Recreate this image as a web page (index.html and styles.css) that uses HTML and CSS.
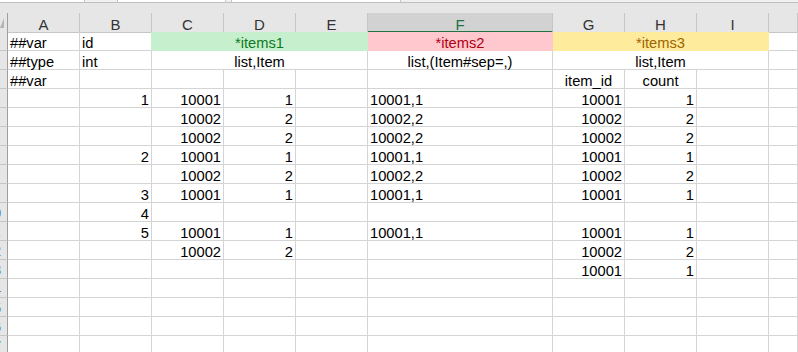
FILE: index.html
```html
<!DOCTYPE html>
<html lang="en">
<head>
  <meta charset="UTF-8">
  <title>items.xlsx</title>
  <link rel="stylesheet" href="styles.css">
</head>
<body>
  <div class="toolbar">
    <div class="toolbar-boxes">
      <div class="toolbar-box box-name"></div>
      <div class="toolbar-box box-fx"></div>
      <div class="toolbar-box box-formula"></div>
    </div>
  </div>

  <div class="sheet">
    <div class="row head">
      <div class="corner"><span class="select-all"></span></div>
      <div class="cell">A</div><div class="cell">B</div><div class="cell">C</div>
      <div class="cell">D</div><div class="cell">E</div><div class="cell sel">F</div>
      <div class="cell">G</div><div class="cell">H</div><div class="cell">I</div>
      <div class="cell"></div>
    </div>

    <div class="row">
      <div class="rh"><span class="rh-num">1</span></div>
      <div class="cell">##var</div><div class="cell">id</div>
      <div class="cell span3 good">*items1</div>
      <div class="cell ctr bad">*items2</div>
      <div class="cell span3 neutral">*items3</div>
      <div class="cell"></div>
    </div>
    <div class="row">
      <div class="rh"><span class="rh-num">2</span></div>
      <div class="cell">##type</div><div class="cell">int</div>
      <div class="cell span3">list,Item</div>
      <div class="cell ctr">list,(Item#sep=,)</div>
      <div class="cell span3">list,Item</div>
      <div class="cell"></div>
    </div>
    <div class="row">
      <div class="rh"><span class="rh-num">3</span></div>
      <div class="cell">##var</div><div class="cell"></div>
      <div class="cell"></div><div class="cell"></div><div class="cell"></div>
      <div class="cell"></div>
      <div class="cell ctr">item_id</div><div class="cell ctr">count</div><div class="cell"></div>
      <div class="cell"></div>
    </div>
    <div class="row">
      <div class="rh"><span class="rh-num">4</span></div>
      <div class="cell"></div><div class="cell num">1</div>
      <div class="cell num">10001</div><div class="cell num">1</div><div class="cell"></div>
      <div class="cell">10001,1</div>
      <div class="cell num">10001</div><div class="cell num">1</div><div class="cell"></div>
      <div class="cell"></div>
    </div>
    <div class="row">
      <div class="rh"><span class="rh-num">5</span></div>
      <div class="cell"></div><div class="cell"></div>
      <div class="cell num">10002</div><div class="cell num">2</div><div class="cell"></div>
      <div class="cell">10002,2</div>
      <div class="cell num">10002</div><div class="cell num">2</div><div class="cell"></div>
      <div class="cell"></div>
    </div>
    <div class="row">
      <div class="rh"><span class="rh-num">6</span></div>
      <div class="cell"></div><div class="cell"></div>
      <div class="cell num">10002</div><div class="cell num">2</div><div class="cell"></div>
      <div class="cell">10002,2</div>
      <div class="cell num">10002</div><div class="cell num">2</div><div class="cell"></div>
      <div class="cell"></div>
    </div>
    <div class="row">
      <div class="rh"><span class="rh-num">7</span></div>
      <div class="cell"></div><div class="cell num">2</div>
      <div class="cell num">10001</div><div class="cell num">1</div><div class="cell"></div>
      <div class="cell">10001,1</div>
      <div class="cell num">10001</div><div class="cell num">1</div><div class="cell"></div>
      <div class="cell"></div>
    </div>
    <div class="row">
      <div class="rh"><span class="rh-num">8</span></div>
      <div class="cell"></div><div class="cell"></div>
      <div class="cell num">10002</div><div class="cell num">2</div><div class="cell"></div>
      <div class="cell">10002,2</div>
      <div class="cell num">10002</div><div class="cell num">2</div><div class="cell"></div>
      <div class="cell"></div>
    </div>
    <div class="row">
      <div class="rh"><span class="rh-num">9</span></div>
      <div class="cell"></div><div class="cell num">3</div>
      <div class="cell num">10001</div><div class="cell num">1</div><div class="cell"></div>
      <div class="cell">10001,1</div>
      <div class="cell num">10001</div><div class="cell num">1</div><div class="cell"></div>
      <div class="cell"></div>
    </div>
    <div class="row">
      <div class="rh"><span class="rh-num">10</span></div>
      <div class="cell"></div><div class="cell num">4</div>
      <div class="cell"></div><div class="cell"></div><div class="cell"></div>
      <div class="cell"></div>
      <div class="cell"></div><div class="cell"></div><div class="cell"></div>
      <div class="cell"></div>
    </div>
    <div class="row">
      <div class="rh"><span class="rh-num">11</span></div>
      <div class="cell"></div><div class="cell num">5</div>
      <div class="cell num">10001</div><div class="cell num">1</div><div class="cell"></div>
      <div class="cell">10001,1</div>
      <div class="cell num">10001</div><div class="cell num">1</div><div class="cell"></div>
      <div class="cell"></div>
    </div>
    <div class="row">
      <div class="rh"><span class="rh-num">12</span></div>
      <div class="cell"></div><div class="cell"></div>
      <div class="cell num">10002</div><div class="cell num">2</div><div class="cell"></div>
      <div class="cell"></div>
      <div class="cell num">10002</div><div class="cell num">2</div><div class="cell"></div>
      <div class="cell"></div>
    </div>
    <div class="row">
      <div class="rh"><span class="rh-num">13</span></div>
      <div class="cell"></div><div class="cell"></div>
      <div class="cell"></div><div class="cell"></div><div class="cell"></div>
      <div class="cell"></div>
      <div class="cell num">10001</div><div class="cell num">1</div><div class="cell"></div>
      <div class="cell"></div>
    </div>
    <div class="row">
      <div class="rh"><span class="rh-num">14</span></div>
      <div class="cell"></div><div class="cell"></div>
      <div class="cell"></div><div class="cell"></div><div class="cell"></div>
      <div class="cell"></div>
      <div class="cell"></div><div class="cell"></div><div class="cell"></div>
      <div class="cell"></div>
    </div>
    <div class="row">
      <div class="rh"><span class="rh-num">15</span></div>
      <div class="cell"></div><div class="cell"></div>
      <div class="cell"></div><div class="cell"></div><div class="cell"></div>
      <div class="cell"></div>
      <div class="cell"></div><div class="cell"></div><div class="cell"></div>
      <div class="cell"></div>
    </div>
    <div class="row">
      <div class="rh"><span class="rh-num">16</span></div>
      <div class="cell"></div><div class="cell"></div>
      <div class="cell"></div><div class="cell"></div><div class="cell"></div>
      <div class="cell"></div>
      <div class="cell"></div><div class="cell"></div><div class="cell"></div>
      <div class="cell"></div>
    </div>
    <div class="row">
      <div class="rh"><span class="rh-num">17</span></div>
      <div class="cell"></div><div class="cell"></div>
      <div class="cell"></div><div class="cell"></div><div class="cell"></div>
      <div class="cell"></div>
      <div class="cell"></div><div class="cell"></div><div class="cell"></div>
      <div class="cell"></div>
    </div>
  </div>
</body>
</html>
```

FILE: styles.css
```css
:root {
  --grid-line: #d4d4d4;
  --head-bg: #e6e6e6;
  --head-line: #c6c6c6;
  --accent: #217346;
  --good-bg: #c6efce;
  --good-fg: #0c7a22;
  --bad-bg: #ffc7ce;
  --bad-fg: #b00012;
  --neutral-bg: #ffeb9c;
  --neutral-fg: #9c6500;
  --cols: 8px repeat(5, 72px) 185px repeat(3, 72px) 1fr;
}

body {
  margin: 0;
  width: 798px;
  height: 352px;
  overflow: hidden;
  background: #fff;
  color: #000;
  font-family: "Liberation Sans", Arial, sans-serif;
  font-size: 14.7px;
}

/* strip left over from the formula bar */
.toolbar {
  height: 13px;
  background: var(--head-bg);
}

.toolbar-boxes {
  display: flex;
  height: 2px;
  background: #f0f0f0;
  border-bottom: 1px solid #c0c0c0;
}

.toolbar-box {
  background: #fff;
  border-right: 1px solid #c6c6c6;
}

.box-name { width: 84px; }
.box-fx { width: 107px; margin-left: 32px; border-left: 1px solid #c6c6c6; }
.box-formula { width: 168px; margin-left: 5px; border-left: 1px solid #c6c6c6; }

/* grid */
.row {
  display: grid;
  grid-template-columns: var(--cols);
  height: 19px;
}

.cell {
  box-sizing: border-box;
  min-width: 0;
  padding: 5px 2px 0;
  line-height: 13px;
  white-space: nowrap;
  border-right: 1px solid var(--grid-line);
  border-bottom: 1px solid var(--grid-line);
}

.num { text-align: right; }
.ctr { text-align: center; }

.span3 {
  grid-column: span 3;
  text-align: center;
}

.good, .bad, .neutral {
  text-align: center;
}

.good {
  background: var(--good-bg);
  color: var(--good-fg);
  border-color: var(--good-bg);
  box-shadow: -1px 0 0 var(--good-bg);
}

.bad {
  background: var(--bad-bg);
  color: var(--bad-fg);
  border-color: var(--bad-bg);
}

.neutral {
  background: var(--neutral-bg);
  color: var(--neutral-fg);
  border-color: var(--neutral-bg);
}

/* column headers */
.head .cell {
  background: var(--head-bg);
  border-right-color: var(--head-line);
  border-bottom-color: var(--head-line);
  text-align: center;
  font-size: 15px;
  color: #333;
}

.head .sel {
  background: #d2d2d2;
  color: var(--accent);
  border-bottom: 2px solid var(--accent);
}

.corner {
  box-sizing: border-box;
  display: flex;
  align-items: flex-end;
  padding-bottom: 4px;
  background: var(--head-bg);
  border-right: 1px solid #9e9e9e;
  border-bottom: 1px solid var(--head-line);
}

.select-all {
  width: 0;
  height: 0;
  border-left: 4px solid transparent;
  border-bottom: 10px solid #b4b4b4;
}

/* row headers, mostly scrolled out of view */
.rh {
  box-sizing: border-box;
  overflow: hidden;
  background: var(--head-bg);
  border-right: 1px solid #9e9e9e;
  border-bottom: 1px solid var(--head-line);
}

.rh-num {
  display: block;
  width: 30px;
  margin-left: -22px;
  padding-top: 4px;
  line-height: 13px;
  text-align: center;
  color: #4f7fbf;
}
```
